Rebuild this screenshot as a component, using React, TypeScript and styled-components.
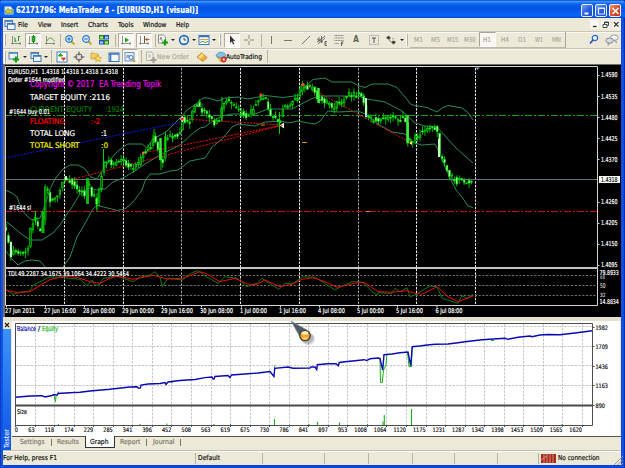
import type { ReactNode } from "react";
import styled, { createGlobalStyle, css } from "styled-components";

const FONT = `"DejaVu Sans Condensed", "DejaVu Sans", "Noto Sans", sans-serif`;

const Colors = {
  Face: "#ece9d8",
  Lime: "#00e600",
  Band: "#2b8a5c",
  Balance: "#0a0ab0",
  Equity: "#12b312",
};

/* ---------- chart data ---------- */

const PRICE_PATH: [number, number][] = [
  [5.5, 230], [8, 240], [10, 256], [13, 251], [18, 252], [22, 255], [26, 250], [28, 246], [30, 230],
  [33, 223], [35, 216], [37, 225], [40, 231], [42, 226], [43.5, 213], [45, 189], [48, 192], [50, 200],
  [55, 196], [58, 193], [62, 184], [64, 179], [69, 181], [73, 184], [78, 188], [82, 192], [86, 196],
  [88, 180], [91, 193], [95, 196], [97, 203], [99, 189], [101, 180], [103, 160], [108, 161], [113, 164],
  [117, 162], [122, 161], [128, 166], [133, 167], [138, 164], [143, 153], [150, 150], [154, 136],
  [157, 144], [160, 162], [163, 161], [165, 139], [170, 137], [175, 135], [180, 133], [182, 119],
  [185, 122], [190, 121], [193, 109], [197, 104], [202, 110], [206, 115], [210, 119], [215, 124],
  [220, 117], [222, 105], [225, 100], [230, 103], [235, 107], [240, 112], [245, 117], [252, 111],
  [257, 102], [261, 97], [265, 99], [268, 107], [272, 117], [277, 119], [279, 127], [283, 107],
  [288, 106], [293, 99], [298, 97], [302, 84], [305, 88], [313, 88], [317, 97], [322, 99], [328, 104],
  [332, 109], [337, 104], [342, 101], [348, 94], [357, 95], [360, 91], [363, 97], [366, 115],
  [370, 119], [377, 121], [382, 117], [392, 117], [398, 120], [405, 117], [407, 141], [411, 140],
  [415, 138], [418, 137], [422, 131], [428, 126], [433, 127], [437, 129], [439, 150], [441, 159],
  [445, 163], [448, 173], [453, 179], [457, 182], [460, 175], [465, 185], [468, 181], [473, 179.5],
];

const BAND_UPPER =
  "5,190 12,193 17,197 22,210 27,216 32,220 40,218 45,205 50,189 55,179 63,169 70,165 78,165 84,168 91,177 97,179 104,168 110,160 117,152 123,147 128,144 142,144 147,148 153,139 166,132 172,126 181,117 187,110 196,104 203,98 208,98 218,101 225,98 238,97 248,99 258,97 265,95.5 283,97.5 298,95.5 305,87 313,79.5 325,78 332,82 352,82 358,85.5 365,87.5 372,84 388,84 397,87.5 405,97 411,104.5 415,105.5 427,107.5 437,112 442,108 448,105.5 462,108 468,112.5 473,120";
const BAND_MIDDLE =
  "5,221 12,226 20,233 30,240 42,240 53,233 60,225 67,214 72,207 78,197 83,191 90,188 97,190 105,189 113,182 125,177 133,172 145,164 160,155 180,145 192,134 200,128 205,127 213,121 222,116 232,114 255,114 268,109 292,109 305,102 318,96 358,96 367,99 385,102 402,111 415,123 425,126 437,127 455,147 465,156 473,163";
const BAND_LOWER =
  "63,267 70,257 77,237 87,220 92,210 97,205 100,206 117,210.5 125,209 133,202 142,190 145,181 150,174 160,174 170,171 178,170 190,161 200,159 205,158 212,147 222,139 232,127 238,124 255,126 265,122 282,121 288,123 298,121 305,122.5 315,124 320,121 328,111 338,112 358,111 365,114 378,124 392,132 405,134 412,141 415,143 422,145 435,144 440,154 445,167 452,182 456,190 462,197 468,206 473,207.5";
const BAND_LOWER_START = "5,250 12,259 18,265 25,261 32,260 40,261 45,267";

const TDI_RED =
  "5,290 17,292.5 30,291.7 38,286.7 50,279.5 66,276 77,277.3 90,281.7 100,283.3 110,278.3 117,276 133,279.3 143,277.3 153,275.3 167,279 182,278.3 190,275.7 200,271.7 206,273.5 220,281.7 235,278.3 248,284.3 257,284.3 265,280 280,286.7 292,284.3 302,279.3 313,277.7 325,281.7 337,287.3 348,285 358,282.3 365,282.7 378,291.7 392,292.3 407,290.7 415,293.3 422,294.3 437,286.7 448,296.7 458,301.7 473,296";
const TDI_GREEN =
  "5,289 13,294.3 20,292.3 30,291 33,285 42,280.7 50,277 60,277.3 80,279.3 87,285.7 92,280 95,285 99,285 103,278.3 117,276 133,281.7 140,277.3 150,275 155,271.7 160,277.3 162.3,286.7 168,278.3 182,280 192,272.7 198,270.7 206,276.5 218,283.3 225,276.7 237,278.3 247,286.7 257,283.3 262,278.3 272,285 279,289.3 285,283.3 293,283.3 303,276.7 315,277.3 322,281.7 335,290 342,286 352,281.7 363,282.3 372,291.7 377,295 378,292.7 392,293.3 395,288.3 400,291.7 407,287.7 410,296.7 415,295 423,290 430,286 437,286.7 442,298.3 458,303.3 462,295.7 467,298.3 473,294.3";

const DAY_LINES = [64.5, 123.5, 181.5, 240.5, 299.5, 358.5, 416.5, 475.5];

const PRICE_LABELS: [string, number][] = [
  ["1.4590", 75], ["1.4535", 96.3], ["1.4480", 117.2], ["1.4425", 138.3], ["1.4370", 159.4],
  ["1.4260", 202], ["1.4205", 222.8], ["1.4150", 243.9], ["1.4095", 264.8],
];

const TIME_LABELS: [string, number, number][] = [
  ["27 Jun 2011", 5, 30], ["27 Jun 16:00", 44, 32], ["28 Jun 08:00", 83, 32], ["29 Jun 00:00", 122, 32],
  ["29 Jun 16:00", 161, 32], ["30 Jun 08:00", 200, 33], ["1 Jul 00:00", 240, 27], ["1 Jul 16:00", 279, 27],
  ["4 Jul 08:00", 318, 27], ["5 Jul 00:00", 357, 27], ["5 Jul 16:00", 396, 27], ["6 Jul 08:00", 435.5, 27],
];

const BALANCE =
  "15.5,398.3 30,397 42,396.7 45,398 52,396.5 54,395.5 57,396.3 58,394.5 70,393.7 80,393.3 90,392 110,390.3 130,388 137,387.7 138.5,389.3 140.5,389 141,386 148,385 160,384.5 165,383.5 166,385.5 168,383 180,381.5 195,380.5 205,378.6 212,378 213,380 214,380 215,377.5 228,376.5 230,378.5 231.5,376 248,374.8 258,374 270,372.5 272,375 274,377.5 274.7,369.3 288,368 293,369.3 310,369 311,368 315,368 316.7,370.5 317.3,365.7 328,364.7 336,364.7 338.3,366.7 339.3,363.5 347,362.5 355,361.7 364,360.7 366.7,361.5 370,359.8 378.3,359 380,359.5 382.7,371 384,355.7 392,355 400,353.7 408,353 410.7,366.7 412.3,347.7 420,347 425,346.3 435,345.3 448,345 458,343.7 465,342.7 482,340.7 505,339.3 508,340.3 518,338.3 530,337 532,337.7 540,336 548,335.5 560,335.7 575,334 592,331.7";

const SIZE_BARS: [number, number][] = [
  [58.5, 1], [140, 1], [167, 1.5], [214, 1], [230.5, 1.2], [274.5, 6], [309, 1], [317.5, 3.3],
  [339.5, 2.7], [367.5, 1], [383, 3.5], [384.3, 10], [411.5, 16], [562, 1],
];

const GRAPH_LABELS = [
  0, 63, 118, 174, 229, 285, 341, 396, 452, 508, 563, 619, 675, 730, 786, 841, 897, 953, 1008, 1064,
  1120, 1175, 1231, 1287, 1342, 1398, 1453, 1509, 1565, 1620,
];

function priceAt(x: number) {
  for (let i = 1; i < PRICE_PATH.length; i++) {
    const [x0, y0] = PRICE_PATH[i - 1];
    const [x1, y1] = PRICE_PATH[i];
    if (x <= x1) return y0 + ((y1 - y0) * (x - x0)) / (x1 - x0);
  }
  return 179.5;
}

// spread of wicks and bodies around the path, fixed from bar to bar
function noise(n: number) {
  const v = Math.sin(n * 12.9898) * 43758.5453;
  return v - Math.floor(v);
}

const CANDLES = Array.from({ length: 191 }, (_, i) => {
  const x = 6 + i * 2.45;
  const open = priceAt(Math.max(5.5, x - 2.2)) + (noise(i) - 0.5) * 5.5;
  const close = priceAt(x) + (noise(i + 300) - 0.5) * 5.5;
  const top = Math.min(open, close);
  const bottom = Math.max(open, close, top + 1);
  return {
    x,
    top,
    bottom,
    high: top - noise(i + 600) * 5.5,
    low: bottom + noise(i + 900) * 5.5,
    down: close > open,
  };
});

/* ---------- icons ---------- */

const Icon = ({ children, size = 12 }: { children: ReactNode; size?: number }) => (
  <svg width={size} height={size} viewBox="0 0 12 12" fill="none" stroke="#5c5f5a" strokeWidth="1">
    {children}
  </svg>
);

const Axes = () => <path d="M2.5 2v8.5M1 9.5h10M9.5 8.5l1.5 1-1.5 1" stroke="#77786f" strokeWidth="0.8" />;
const Plus = () => <path d="M8 5.5v6M5 8.5h6" stroke="#12a012" strokeWidth="2.2" />;

const BarIcon = () => (
  <Icon>
    <Axes />
    <path d="M5 8V4M8.5 7V2M8.5 2.5H10M5 4H4M5 7h1.5" stroke="#2f9430" />
  </Icon>
);
const CandleIcon = () => (
  <Icon>
    <Axes />
    <path d="M6.5 1v8" stroke="#0c7d12" />
    <rect x="5" y="2.5" width="3" height="5" fill="#1eb01e" stroke="#0c7d12" strokeWidth="0.6" />
  </Icon>
);
const LineIcon = () => (
  <Icon>
    <Axes />
    <path d="M3 7c2-4 4-4 7.5 0" stroke="#44a544" />
  </Icon>
);
const ZoomIcon = ({ plus }: { plus?: boolean }) => (
  <Icon>
    <path d="M7.5 7.5l3 3" stroke="#d9a520" strokeWidth="2" />
    <circle cx="5" cy="5" r="3.3" fill="#d5ecfb" stroke="#2b7cc9" strokeWidth="1.2" />
    <path d={plus ? "M3.3 5h3.4M5 3.3v3.4" : "M3.3 5h3.4"} stroke="#1d5fb0" />
  </Icon>
);
const TilesIcon = () => (
  <Icon>
    <rect x="1.5" y="1.5" width="4" height="3.5" fill="#b9e6a8" stroke="#258a25" />
    <rect x="6.5" y="1.5" width="4" height="3.5" fill="#b8cff5" stroke="#2350b5" />
    <rect x="1.5" y="6.5" width="4" height="3.5" fill="#b8cff5" stroke="#2350b5" />
    <rect x="6.5" y="6.5" width="4" height="3.5" fill="#b9e6a8" stroke="#258a25" />
    <path d="M1 2h5M6 7h5" stroke="#258a25" />
    <path d="M6 2h5M1 7h5" stroke="#2350b5" />
  </Icon>
);
const ScrollIcon = () => (
  <Icon>
    <Axes />
    <path d="M5 3.5l4 2.5-4 2.500z" fill="#1fa11f" stroke="none" />
  </Icon>
);
const ShiftIcon = () => (
  <Icon>
    <Axes />
    <path d="M6.5 2v7" stroke="#555" />
    <path d="M7.5 5.5h4M9.5 4l-2 1.5 2 1.5" stroke="#c2502b" />
  </Icon>
);
const IndicatorIcon = () => (
  <Icon>
    <path d="M1.5 1h5l2 2v6h-7z" fill="#f6f6f2" stroke="#777" strokeWidth="0.8" />
    <path d="M3 6l1-3 1 4" stroke="#666" strokeWidth="0.7" />
    <Plus />
  </Icon>
);
const ClockIcon = () => (
  <Icon>
    <circle cx="6" cy="6" r="4.4" fill="#e9f3fd" stroke="#2467bd" strokeWidth="1.6" />
    <path d="M6 3.5V6h2.3" stroke="#444" strokeWidth="0.9" />
  </Icon>
);
const TemplateIcon = () => (
  <Icon>
    <rect x="1" y="1.5" width="10" height="9" fill="#fff" stroke="#3b76ba" />
    <path d="M1 2.5h10" stroke="#3b76ba" strokeWidth="1.6" />
    <path d="M2 6l3-1 2 1 3-1" stroke="#c98b2e" />
    <path d="M2 8.500l3-1 2 1 3-1" stroke="#3ca03c" />
  </Icon>
);
const PointerIcon = () => (
  <Icon>
    <path d="M4 1.5v7.5l1.8-1.6 1.3 3 1.2-.5-1.3-2.9h2.2z" fill="#333" stroke="none" />
  </Icon>
);
const CrossIcon = () => (
  <Icon>
    <path d="M6 1v4M6 7v4M1 6h4M7 6h4" stroke="#8a8a80" />
  </Icon>
);
const StrokeIcon = ({ d }: { d: string }) => (
  <Icon>
    <path d={d} stroke="#777870" />
  </Icon>
);
const ChannelIcon = () => (
  <Icon>
    <path d="M1 8l8-6M2 10l7-6M3 3v5M5.5 2v7M1 5l6 3" stroke="#55564f" strokeWidth="0.8" />
    <path d="M11 7.5H9v4h2M9 9.5h1.5" stroke="#444" strokeWidth="0.8" />
  </Icon>
);
const FiboIcon = () => (
  <Icon>
    <path d="M1.5 1.5h9M1.5 4h9M1.5 6.5h9M1.5 9.5h5" stroke="#777870" strokeDasharray="1 .6" />
    <path d="M10.5 8H8.5v4M8.5 9.7h1.5" stroke="#444" strokeWidth="0.8" />
  </Icon>
);
const LabelIcon = () => (
  <Icon>
    <rect x="1.5" y="1.5" width="9" height="9" stroke="#888" strokeDasharray="1 .7" strokeWidth="0.8" />
    <path d="M4 4h4M6 4v5" stroke="#555" />
  </Icon>
);
const ArrowsIcon = () => (
  <Icon>
    <path d="M1 4l2.5-2.500L6 4 3.5 5.500zM6 8l2.5-1.500L11 8 8.5 10.500z" fill="#444" stroke="none" />
    <path d="M4 5l1.5 3M7.5 4l1 1.5" stroke="#666" strokeWidth="0.8" />
  </Icon>
);
const SearchIcon = () => (
  <Icon>
    <circle cx="7" cy="4" r="2.7" fill="#edf3fc" stroke="#2f65ca" strokeWidth="1.2" />
    <path d="M5 6l-3 3.5" stroke="#2455b8" strokeWidth="1.7" />
  </Icon>
);
const ChatIcon = () => (
  <Icon size={14}>
    <ellipse cx="8" cy="4" rx="3.3" ry="2.3" fill="#fafafa" stroke="#8b8e96" strokeWidth="0.8" />
    <ellipse cx="4" cy="6.5" rx="3.2" ry="2.2" fill="#dcdde2" stroke="#7c7f88" strokeWidth="0.8" />
    <path d="M3 8.5l-.5 2 2-1.700M9 6.3l1 2-2-1.8" fill="#dcdde2" stroke="#7c7f88" strokeWidth="0.6" />
  </Icon>
);
const NewChartIcon = () => (
  <Icon>
    <rect x="1" y="1.5" width="8.5" height="6.5" fill="#e6f1fb" stroke="#5b87b5" />
    <path d="M1 2.3h8.5" stroke="#5b87b5" />
    <Plus />
  </Icon>
);
const ProfilesIcon = () => (
  <Icon>
    <rect x="1" y="1.5" width="7.5" height="6" fill="#dceaf8" stroke="#4679b5" />
    <rect x="3.5" y="4.5" width="7.5" height="6" fill="#eef6fd" stroke="#4679b5" />
    <path d="M1 2.3h7.5M3.5 5.3H11" stroke="#4679b5" />
  </Icon>
);
const MarketIcon = () => (
  <Icon>
    <rect x="1" y="1" width="10" height="10" fill="#fff" stroke="#3f7fc4" />
    <path d="M2.500 5l2-2.500L6.500 5z" fill="#1da51d" stroke="#1da51d" />
    <path d="M5.500 7l2 2.500L9.500 7z" fill="#e0402a" stroke="#e0402a" />
  </Icon>
);
const TargetIcon = () => (
  <Icon>
    <circle cx="6" cy="6" r="3.2" stroke="#555" />
    <path d="M6 .5v4M6 7.5v4M.5 6h4M7.5 6h4" stroke="#555" />
  </Icon>
);
const FolderIcon = () => (
  <Icon>
    <path d="M1 2h3l1 1h3v5H1z" fill="#f4cf62" stroke="#c19b33" strokeWidth="0.7" />
    <path d="M8 4l1 2.3 2.6.2-2 1.7.7 2.6L8 9.5l-2.300 1.300.7-2.600-2-1.700L7 6.300z" fill="#ffe15a" stroke="#b98f1e" strokeWidth="0.6" />
  </Icon>
);
const TerminalIcon = () => (
  <Icon>
    <rect x="1" y="2" width="10" height="8.5" fill="#f4f9fe" stroke="#3e75b8" />
    <path d="M1 3h10M2.5 3v7" stroke="#3e75b8" strokeWidth="1.6" />
  </Icon>
);
const TesterIcon = () => (
  <Icon>
    <rect x="1" y="1.5" width="9" height="8.5" fill="#e2edf8" stroke="#6c94bf" />
    <path d="M2.5 7l1.5-3 1.5 3 1.5-3" stroke="#446d9d" strokeWidth="0.8" />
    <circle cx="7" cy="6.5" r="2" fill="#fff" stroke="#3775bd" />
    <path d="M8.5 8l2.5 3" stroke="#cf9a22" strokeWidth="1.5" />
  </Icon>
);
const OrderIcon = () => (
  <Icon>
    <path d="M1.5 1h5l1.5 2v6.5H1.5z" fill="#f3f2ea" stroke="#a5a398" strokeWidth="0.8" />
    <path d="M3 4h3M3 6h3" stroke="#a5a398" strokeWidth="0.8" />
    <path d="M8.5 6v6M5.5 9h6" stroke="#a09f94" strokeWidth="2" />
  </Icon>
);
const EditorIcon = () => (
  <Icon>
    <path d="M1 6l4.500-4L11 6.500 7 10.500z" fill="#f2b32c" stroke="#b3761a" strokeWidth="0.8" />
    <path d="M2 6l4-3.300 2 1.700-4 3.300z" fill="#ffe089" stroke="none" />
  </Icon>
);
const AutoIcon = () => (
  <Icon>
    <path d="M1 5c1-5 9-5 10 0L6 7z" fill="#7fc4ee" stroke="#3d83b8" strokeWidth="0.7" />
    <path d="M2 6l4 5 4-5-4 1.500z" fill="#f1c551" stroke="#b6892a" strokeWidth="0.7" />
    <circle cx="8.7" cy="8.5" r="2.900" fill="#dd2a1b" stroke="none" />
    <rect x="7.7" y="7.5" width="2" height="2" fill="#fff" stroke="none" />
  </Icon>
);

/* ---------- text ---------- */

interface LabelProps {
  x: number;
  y: number;
  w: number;
  fill?: string;
  size?: number;
  children: ReactNode;
}

// y is the middle of the line of text
const Label = ({ x, y, w, fill = "#fff", size = 6.6, children }: LabelProps) => (
  <ChartText x={x} y={y + size * 0.37} textLength={w} lengthAdjust="spacingAndGlyphs" fill={fill} stroke={fill} fontSize={size}>
    {children}
  </ChartText>
);

interface FitTextProps {
  text: string;
  w: number;
  fill?: string;
  size?: number;
  bold?: boolean;
}

function FitText({ text, w, fill = "#111", size = 6.8, bold }: FitTextProps) {
  return (
    <svg width={w} height="10" overflow="visible">
      <ChartText
        x="0"
        y={5 + size * 0.36}
        textLength={w}
        lengthAdjust="spacingAndGlyphs"
        fontSize={size}
        fontWeight={bold ? 700 : 400}
        fill={fill}
        stroke={fill}
      >
        {text}
      </ChartText>
    </svg>
  );
}

/* ---------- charts ---------- */

function PriceChart() {
  return (
    <svg width="616" height="252" viewBox="5 65 616 252">
      <rect x="5" y="65" width="616" height="252" fill="#000" />
      {DAY_LINES.map((x, i) => (
        <path key={x} d={`M${x} 68V304`} stroke={i === 2 || i === 5 ? "#a4a4a4" : "#eee"} strokeDasharray="2.4 1.25" />
      ))}
      <path d="M5 115.5H597" stroke="#1f9a1f" strokeDasharray="7 2 2 2" />
      <path d="M5 211.5H597" stroke="#c41010" strokeDasharray="7 2 2 2" />
      <path d="M5 179.5H597" stroke="#66737f" />

      <g fill="none" stroke={Colors.Band} strokeWidth="1">
        <polyline points={BAND_UPPER} />
        <polyline points={BAND_MIDDLE} />
        <polyline points={BAND_LOWER} />
        <polyline points={BAND_LOWER_START} />
      </g>

      <g fill="none" stroke="#e60c0c" strokeDasharray="2 1.2">
        <path d="M66 181L283 125M143 153L283 125M183 119L283 125M303 84L411 143" />
        <path d="M5 158L182 122" stroke="#1616ee" />
      </g>

      {CANDLES.map((c) => (
        <g key={c.x}>
          <path d={`M${c.x} ${c.high}V${c.low}`} stroke={Colors.Lime} strokeWidth="0.8" />
          <rect
            x={c.x - 0.85}
            y={c.top}
            width="1.7"
            height={c.bottom - c.top}
            fill={c.down ? "#c4ffc0" : "#045a04"}
            stroke={Colors.Lime}
            strokeWidth="0.6"
          />
        </g>
      ))}
      <path d="M35.5 211v12M103.5 149v20M97 193v18M161 150v20M165.5 132v20M222 97v24M279.5 112v22M154 129v14" stroke={Colors.Lime} strokeWidth="0.9" />
      <path d="M87.5 178v26M43 211v22" stroke="#0fb50f" strokeWidth="3" />
      <path d="M160.5 138v22M318.500 88v15M407.5 115v28" stroke="#3fe83b" strokeWidth="2.4" />
      <path d="M11 242v15M66 176v4M366 98v19M439 139v18" stroke="#c4ffc0" strokeWidth="1.9" />

      <path d="M280 125.5l4-3v6z" fill="#fff" />
      <path d="M281 125.5h2" stroke="#e98a14" />
      <path d="M180 119l2.5-3 2 3-2 3z" fill="#fff" />
      <circle cx="182.3" cy="119" r="1.5" fill="#e5271c" />
      <circle cx="143.3" cy="153" r="1.4" fill="#ef6b55" />
      <circle cx="261" cy="95" r="1.6" fill="#ef4b35" />
      <circle cx="303" cy="84.5" r="1.6" fill="#ef4b35" />
      <path d="M261 125h4M302 142.5h5M366 211.5h4" stroke="#d8890f" />
      <path d="M409 143l3-2v4z" fill="#ffe96a" />
      <path d="M366 115.5h2" stroke="#4b83ff" />
      <path d="M475 67.5h5l-2.500 2.500z" fill="#7f93a8" />

      <path d="M5.5 267V66.5H597.5V305.5" stroke="#d5d5d5" fill="none" />
      <rect x="5" y="267" width="593" height="2" fill="#c6c6c6" />

      <path d="M5 275.5H597M5 285.5H597M5 295.5H597" stroke="#6f6f6f" strokeDasharray="2.2 1.5" />
      <polyline points={TDI_GREEN} fill="none" stroke="#0c7a0c" />
      <polyline points={TDI_RED} fill="none" stroke="#ee0a0a" />
      <path d="M5.5 269V305.5H597.5" stroke="#d5d5d5" fill="none" />
      {TIME_LABELS.map(([text, x, w]) => (
        <g key={text}>
          <path d={`M${x + 1.5} 305v2.5`} stroke="#ddd" />
          <Label x={x} y={311} w={w}>{text}</Label>
        </g>
      ))}

      {PRICE_LABELS.map(([text, y]) => (
        <g key={text}>
          <path d={`M597 ${Math.round(y) + 0.5}h2.5`} stroke="#ccc" />
          <Label x={601} y={y} w={16.5}>{text}</Label>
        </g>
      ))}
      <rect x="599" y="176" width="21" height="7" fill="#fff" />
      <Label x={601} y={179.5} w={16.5} fill="#000">1.4318</Label>
      <Label x={599.5} y={272.4} w={19.3}>79.8933</Label>
      <Label x={600} y={277} w={5} fill="#aaa" size={4.8}>68</Label>
      <Label x={600} y={285.5} w={5.5} fill="#ccc">50</Label>
      <Label x={600} y={295} w={5.5} fill="#ccc" size={5.6}>32</Label>
      <Label x={599.5} y={301.2} w={19.3}>14.8834</Label>

      <Label x={8} y={71.5} w={110}>{"EURUSD,H1  1.4318 1.4318 1.4318 1.4318"}</Label>
      <Label x={8} y={79.2} w={57}>Order #1644 modified</Label>
      <Label x={30} y={84.2} w={131} size={8} fill="#ea00ea">{"Copyright © 2017  EA Trending Topik"}</Label>
      <Label x={30} y={96.7} w={80} size={7.8}>TARGET EQUITY :2116</Label>
      <Label x={30} y={108.8} w={62} size={7.8} fill="#0a780a">CURRENT EQUITY</Label>
      <Label x={105} y={108.8} w={19} size={7.8} fill="#0a780a">:1924</Label>
      <Label x={9} y={112} w={41}>#1644 buy 0.01</Label>
      <Label x={30} y={121.2} w={35} size={7.8} fill="#f00">FLOATING</Label>
      <Label x={91} y={121.2} w={9} size={7.8} fill="#f00">:-2</Label>
      <Label x={30} y={133.3} w={45} size={7.8}>TOTAL LONG</Label>
      <Label x={101} y={133.3} w={6} size={7.8}>:1</Label>
      <Label x={30} y={145.3} w={49.5} size={7.8} fill="#f6f600">TOTAL SHORT</Label>
      <Label x={101} y={145.3} w={7} size={7.8} fill="#f6f600">:0</Label>
      <Label x={9} y={207.3} w={22}>#1644 sl</Label>
      <Label x={8} y={273.8} w={121}>TDI 49.2287 34.1675 39.1064 34.4222 30.5454</Label>
    </svg>
  );
}

function BalanceGraph() {
  return (
    <svg width="608" height="115" viewBox="12 322 608 115">
      <rect x="12" y="322" width="608" height="115" fill="#fff" />
      <g stroke="#c4c4c4" strokeDasharray="2.4 1.3">
        {GRAPH_LABELS.slice(1).map((n, i) => {
          const x = Math.floor(15.5 + 19.55 * (i + 1)) + 0.5;
          return <path key={n} d={`M${x} 325V426`} />;
        })}
        <path d="M16 327.5H592M16 347.5H592M16 366.5H592M16 386.5H592" />
      </g>
      <path
        d="M54 395.5L55.5 403L56 397M58.3 395V392.5M380 359L380.5 383.5H382.3L383.5 371L386 366L386.8 356M407.5 353L409 367.5H411.5L412 348M274.7 369V366.5M171 383.3h2M491 341.5h3"
        stroke={Colors.Equity}
        fill="none"
      />
      <polyline points={BALANCE} fill="none" stroke={Colors.Balance} strokeWidth="1.4" />
      <path d="M15.5 426V324.5H592.5V426.5H15" fill="none" stroke="#4d4d4d" />
      <rect x="15" y="405.5" width="578" height="2" fill="#4b4b4b" />
      {SIZE_BARS.map(([x, h]) => (
        <path key={x} d={`M${x} 426V${426 - h}`} stroke="#15b015" strokeWidth="1.1" />
      ))}
      <Label x={17} y={329.2} w={19} fill={Colors.Balance}>Balance</Label>
      <Label x={38} y={329.2} w={2.2} fill="#222">/</Label>
      <Label x={42} y={329.2} w={16} fill="#18b818">Equity</Label>
      <Label x={17} y={412.8} w={10} fill="#111">Size</Label>
      {GRAPH_LABELS.map((n, i) => {
        const w = String(n).length * 3.15;
        const end = i === 0 ? 18 : 15 + 19.55 * i;
        return (
          <g key={n}>
            <Label x={end - w} y={431.2} w={w} fill="#111" size={6.2}>{n}</Label>
            <path d={`M${Math.floor(15.5 + 19.55 * i) + 0.5} 426v2`} stroke="#4d4d4d" />
          </g>
        );
      })}
      {[1982, 1709, 1436, 1163, 890].map((n, i) => (
        <g key={n}>
          <path d={`M592 ${Math.round(327.5 + i * 19.6) + 0.5}h2.5`} stroke="#4d4d4d" />
          <Label x={595.5} y={328.7 + i * 19.5} w={n === 890 ? 9.5 : 12.5} fill="#111" size={6.2}>{n}</Label>
        </g>
      ))}
    </svg>
  );
}

/* ---------- app ---------- */

const MENU: [string, number][] = [
  ["File", 10], ["View", 13.5], ["Insert", 17.5], ["Charts", 20], ["Tools", 15.5], ["Window", 23.5], ["Help", 13],
];

const STATUS_CELLS = [66.5, 62, 44, 44, 42, 43, 41];

const Muted = "#7c7a6e";
const Disabled = "#aeac9f";

interface ToolProps {
  w: number;
  on?: boolean;
  children: ReactNode;
}

const Tool = ({ w, on, children }: ToolProps) => (
  <ToolSlot $w={w}>{on ? <Pressed>{children}</Pressed> : children}</ToolSlot>
);

export default function App() {
  return (
    <>
      <GlobalStyle />
      <Frame>
        <TitleBar>
          <Icon size={10}>
            <path d="M1 2h7l3 3v6H1z" fill="#e8f1e5" stroke="#9cc1e8" />
            <path d="M2 7l3-3 2 3 3-3v6H2z" fill="#efb838" stroke="#3c9c4a" strokeWidth="0.9" />
          </Icon>
          <Title>
            <FitText text="62171796: MetaTrader 4 - [EURUSD,H1 (visual)]" w={182} fill="#fff" size={8.2} bold />
          </Title>
          <WindowButton>
            <svg width="11" height="12"><path d="M2.5 8.5h4" stroke="#fff" strokeWidth="2" /></svg>
          </WindowButton>
          <WindowButton>
            <svg width="11" height="12"><path d="M2.5 3v6h6V3zM2 3.500h7" stroke="#dfe9ff" fill="none" strokeWidth="1.2" /></svg>
          </WindowButton>
          <WindowButton $close>
            <svg width="11" height="12"><path d="M2.5 3l6 6M8.5 3l-6 6" stroke="#fff" strokeWidth="1.6" /></svg>
          </WindowButton>
        </TitleBar>

        <MenuBar>
          <ProfilesIcon />
          <MenuList>
            {MENU.map(([name, w]) => (
              <FitText key={name} text={name} w={w} />
            ))}
          </MenuList>
          <MdiButton><svg width="9" height="9"><path d="M3 6.5h3.5" stroke="#222" strokeWidth="1.3" /></svg></MdiButton>
          <MdiButton><svg width="9" height="9"><path d="M3.5 4V2H7.5V5.5H6M2 4.5h4v3H2zM3.5 2.5h4" stroke="#333" fill="none" strokeWidth="0.9" /></svg></MdiButton>
          <MdiButton><svg width="9" height="9"><path d="M2 2.2l4.5 4.5M6.5 2.2L2 6.7" stroke="#222" strokeWidth="1.2" /></svg></MdiButton>
        </MenuBar>

        <Toolbar $height={17}>
          <Grip />
          <Tool w={17}><BarIcon /></Tool>
          <Tool w={17} on><CandleIcon /></Tool>
          <Tool w={18}><LineIcon /></Tool>
          <Divider $w={2} />
          <Tool w={17}><ZoomIcon plus /></Tool>
          <Tool w={17.5}><ZoomIcon /></Tool>
          <Tool w={17.5}><TilesIcon /></Tool>
          <Divider $w={4} />
          <Tool w={18} on><ScrollIcon /></Tool>
          <Tool w={18} on><ShiftIcon /></Tool>
          <Divider $w={4} />
          <Tool w={12}><IndicatorIcon /></Tool>
          <Caret $w={7} />
          <Tool w={15}><ClockIcon /></Tool>
          <Caret $w={5} />
          <Tool w={15}><TemplateIcon /></Tool>
          <Caret $w={6} />
          <Grip $gap={2} />
          <Tool w={17} on><PointerIcon /></Tool>
          <Tool w={18}><CrossIcon /></Tool>
          <Divider $w={6} />
          <Tool w={13}><StrokeIcon d="M6.5 2v8" /></Tool>
          <Tool w={22}><StrokeIcon d="M2 6.5h8" /></Tool>
          <Tool w={13}><StrokeIcon d="M2 10l8-8" /></Tool>
          <Tool w={20}><ChannelIcon /></Tool>
          <Tool w={14}><FiboIcon /></Tool>
          <Tool w={20}><Letter>A</Letter></Tool>
          <Tool w={15}><LabelIcon /></Tool>
          <Tool w={19}><ArrowsIcon /></Tool>
          <Caret $w={4} />
          <Grip $gap={2} />
          <Periods>
            {["M1", "M5", "M15", "M30", "H1", "H4", "D1", "W1", "MN"].map((p) => (
              <Period key={p} $on={p === "H1"}>
                <FitText text={p} w={p.length === 3 ? 11.5 : p.startsWith("M") ? 9 : 8} fill={Disabled} />
              </Period>
            ))}
          </Periods>
          <SearchTools>
            <SearchIcon />
            <ChatIcon />
          </SearchTools>
        </Toolbar>

        <Toolbar $height={16}>
          <Grip />
          <Tool w={14}><NewChartIcon /></Tool>
          <Caret $w={7} />
          <Tool w={15}><ProfilesIcon /></Tool>
          <Caret $w={6} />
          <Divider $w={4} />
          <Tool w={17}><MarketIcon /></Tool>
          <Tool w={17}><TargetIcon /></Tool>
          <Tool w={18}><FolderIcon /></Tool>
          <Tool w={17}><TerminalIcon /></Tool>
          <Tool w={16} on><TesterIcon /></Tool>
          <Divider $w={7} />
          <Tool w={12}><OrderIcon /></Tool>
          <FitText text="New Order" w={32} fill={Disabled} />
          <Tool w={26}><EditorIcon /></Tool>
          <Tool w={11}><AutoIcon /></Tool>
          <FitText text="AutoTrading" w={36} />
          <Divider $w={10} />
        </Toolbar>

        <ChartWindow>
          <PriceChart />
        </ChartWindow>

        <Tester>
          <TesterSide>
            <svg width="8" height="8"><path d="M2 2l4 4M6 2L2 6" stroke="#222" strokeWidth="1.2" /></svg>
            <TesterName>Tester</TesterName>
          </TesterSide>
          <TesterBody>
            <BalanceGraph />
            <Tabs>
              <Tab $w={38.5}><FitText text="Settings" w={24.5} fill={Muted} /></Tab>
              <Tab $w={33} $plain><FitText text="Results" w={22} fill={Muted} /></Tab>
              <Tab $w={30} $active><FitText text="Graph" w={18.5} /></Tab>
              <Tab $w={32}><FitText text="Report" w={20.5} fill={Muted} /></Tab>
              <Tab $w={34}><FitText text="Journal" w={21.5} fill={Muted} /></Tab>
            </Tabs>
          </TesterBody>
        </Tester>

        <StatusBar>
          <StatusCell $w={192}><FitText text="For Help, press F1" w={54} /></StatusCell>
          <StatusCell $w={STATUS_CELLS[0]} $line><FitText text="Default" w={22} /></StatusCell>
          {STATUS_CELLS.slice(1).map((w, i) => (
            <StatusCell key={i} $w={w} $line />
          ))}
          <StatusCell $w={76} $line>
            <svg width="16" height="9">
              <rect width="15" height="9" fill="#a82a18" />
              <path d="M3 0v9M6 0v9M9 0v9M12 0v9M0 6l6-4" stroke="#e5b3a4" strokeWidth="0.7" />
            </svg>
            <FitText text="No connection" w={41.5} />
          </StatusCell>
          <SizeGrip width="9" height="11"><path d="M0 11l9-9M3.5 11l5.500-5.500M7 11l2-2" stroke="#9b988a" /></SizeGrip>
        </StatusBar>

        <Pointer width="26" height="28" viewBox="0 0 26 28">
          <ellipse cx="18" cy="19" rx="7" ry="6" fill="#000" opacity="0.14" />
          <ellipse cx="17.5" cy="18" rx="6" ry="5.5" fill="#000" opacity="0.16" />
          <path d="M1 1L17 10L10 17z" fill="#515a64" stroke="#8d949b" strokeWidth="0.7" />
          <circle cx="15" cy="15.5" r="5.2" fill="#f3a52a" stroke="#3f3f3f" strokeWidth="1.3" />
          <ellipse cx="14.8" cy="13" rx="3.3" ry="1.8" fill="#fff0c4" />
          <ellipse cx="15" cy="18.5" rx="2.7" ry="1.2" fill="#ffd45e" />
        </Pointer>
      </Frame>
    </>
  );
}

/* ---------- styles ---------- */

const GlobalStyle = createGlobalStyle`
  * {
    box-sizing: border-box;
  }

  body {
    margin: 0;
    overflow: hidden;
    font-family: ${FONT};
  }

  svg {
    display: block;
    flex: none;
  }
`;

const ChartText = styled.text`
  font-family: ${FONT};
  stroke-width: 0.18px;
  white-space: pre;
`;

const Frame = styled.div`
  position: relative;
  display: flex;
  flex-direction: column;
  width: 625px;
  height: 468px;
  padding: 0 4px 3px 3px;
  background: linear-gradient(90deg, #0831b5 0, #1560f0 2px, #0b46dc 3px, #0b46dc 621px, #1556ee 623px, #0424a0 625px);
  overflow: hidden;
`;

const TitleBar = styled.div`
  display: flex;
  flex: none;
  align-items: center;
  gap: 1.5px;
  height: 18px;
  margin: 0 -4px 0 -3px;
  padding: 2px 4px 0 4px;
  border-radius: 4px 4px 0 0;
  background: linear-gradient(#0a45c0 0, #3d92fc 1.5px, #0a62ee 4px, #0254e3 8px, #0560f2 14px, #0667fb 16px, #0241bd 18px);
`;

const Title = styled.div`
  flex: 1;
  padding-left: 0.5px;
`;

const WindowButton = styled.div<{ $close?: boolean }>`
  width: 12.5px;
  height: 13px;
  border: 1px solid #e6eefc;
  border-radius: 2px;
  background: ${({ $close }) =>
    $close ? "linear-gradient(135deg, #f09a7c, #e0492a 50%, #c03410)" : "linear-gradient(135deg, #7ba2f5, #2a5fe0 50%, #1c48c5)"};
`;

const MenuBar = styled.div`
  display: flex;
  flex: none;
  align-items: center;
  height: 13px;
  padding-left: 1px;
  background: ${Colors.Face};
`;

const MenuList = styled.div`
  display: flex;
  flex: 1;
  gap: 9.7px;
  padding-left: 2px;
`;

const MdiButton = styled.div`
  width: 9px;
  height: 9px;
  margin-left: 2px;
  background: #f8f7f1;
`;

const Toolbar = styled.div<{ $height: number }>`
  display: flex;
  flex: none;
  align-items: center;
  height: ${({ $height }) => $height}px;
  border-top: 1px solid #c9c6b6;
  background: ${Colors.Face};
  box-shadow: inset 0 1px 0 #f9f8f2;
`;

const Grip = styled.div<{ $gap?: number }>`
  flex: none;
  width: 2px;
  height: 12px;
  margin: 0 ${({ $gap = 1 }) => $gap}px;
  border-left: 1px solid #fff;
  border-right: 1px solid #b3b0a0;
`;

const ToolSlot = styled.div<{ $w: number }>`
  display: flex;
  flex: none;
  align-items: center;
  justify-content: center;
  width: ${({ $w }) => $w}px;
`;

const Pressed = styled.div`
  display: flex;
  align-items: center;
  justify-content: center;
  width: 16px;
  height: 15px;
  border: 1px solid;
  border-color: #b1ae9f #fff #fff #b1ae9f;
  background: #f8f7f2;
`;

const Divider = styled.div<{ $w: number }>`
  flex: none;
  width: ${({ $w }) => $w}px;
  height: 13px;
  background: linear-gradient(#b5b2a3, #b5b2a3) center / 1px 100% no-repeat;
`;

const Caret = styled.div<{ $w: number }>`
  flex: none;
  width: ${({ $w }) => $w}px;

  &::after {
    content: "";
    display: block;
    width: 0;
    margin: 0 auto;
    border: 2px solid transparent;
    border-top: 2px solid #222;
    border-bottom: 0;
  }
`;

const Letter = styled.span`
  color: #606158;
  font: bold 8px/12px ${FONT};
`;

const Periods = styled.div`
  display: flex;
  flex: none;
  align-items: center;
  width: 156px;
  height: 16px;
  border-right: 1px solid #a9a698;
  border-bottom: 1px solid #bcb9aa;
`;

const Period = styled.div<{ $on: boolean }>`
  display: flex;
  align-items: center;
  justify-content: center;
  width: 17.2px;
  height: 15px;

  ${({ $on }) =>
    $on &&
    css`
      border: 1px solid;
      border-color: #a7a495 #fff #fff #a7a495;
      background: #f8f7f2;
    `}
`;

const SearchTools = styled.div`
  display: flex;
  align-items: center;
  gap: 5px;
  margin-left: auto;
  padding-right: 2px;
`;

const ChartWindow = styled.div`
  flex: none;
  height: 257px;
  padding: 1px 0 0 2px;
  border-bottom: 4px solid #e4e1d0;
  background: #6f6d64;
`;

const Tester = styled.div`
  display: flex;
  flex: none;
  height: 129px;
  background: ${Colors.Face};
`;

const TesterSide = styled.div`
  display: flex;
  flex-direction: column;
  flex: none;
  width: 9px;
`;

const TesterName = styled.div`
  display: flex;
  flex: 1;
  align-items: center;
  width: 8px;
  padding-top: 2px;
  background: linear-gradient(#0d55e6, #3c93fb);
  color: #fff;
  font: 7px/8px ${FONT};
  writing-mode: vertical-rl;
  transform: rotate(180deg);
`;

const TesterBody = styled.div`
  flex: 1;
`;

const Tabs = styled.div`
  display: flex;
  align-items: flex-start;
  height: 13px;
  padding-left: 1px;
  border-top: 1px solid #55534b;
`;

const Tab = styled.div<{ $w: number; $active?: boolean; $plain?: boolean }>`
  display: flex;
  align-items: center;
  justify-content: center;
  width: ${({ $w }) => $w}px;
  height: 10px;
  ${({ $active, $plain }) =>
    !$active &&
    !$plain &&
    css`
      background: linear-gradient(#77756a, #77756a) right center / 1px 7px no-repeat;
    `}
  ${({ $active }) =>
    $active &&
    css`
      height: 12px;
      margin-top: -1px;
      border: 1px solid #33322e;
      border-top: 0;
      background: #fff;
    `}
`;

const StatusBar = styled.div`
  display: flex;
  flex: 1;
  align-items: center;
  border-top: 1px solid #c2bfb0;
  background: ${Colors.Face};
  box-shadow: inset 0 1px 0 #fbfaf5;
`;

const StatusCell = styled.div<{ $w: number; $line?: boolean }>`
  display: flex;
  flex: none;
  align-items: center;
  gap: 1px;
  width: ${({ $w }) => $w}px;
  height: 11px;
  padding-left: ${({ $line }) => ($line ? 2 : 0)}px;
  border-left: ${({ $line }) => ($line ? "1px solid #b5b2a2" : "0")};
`;

const SizeGrip = styled.svg`
  align-self: flex-end;
  margin-left: auto;
`;

// floating mouse cursor, lies over the splitter and the tester graph
const Pointer = styled.svg`
  position: absolute;
  left: 290px;
  top: 320px;
`;
